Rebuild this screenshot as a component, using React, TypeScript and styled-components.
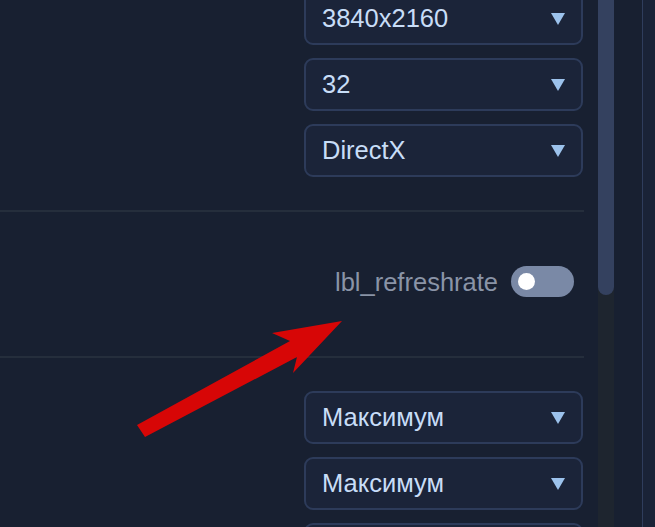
import { FC } from "react";
import styled, { createGlobalStyle } from "styled-components";

const GlobalStyle = createGlobalStyle`
  html, body {
    margin: 0;
    padding: 0;
    background: #182031;
    font-family: "Liberation Sans", Arial, sans-serif;
  }
`;

const Page = styled.div`
  position: relative;
  display: flex;
  height: 100vh;
  width: 100vw;
  overflow: hidden;
  background: #182031;
`;

const Main = styled.div`
  width: 584px;
  flex-shrink: 0;
  overflow: hidden;
`;

// content is scrolled down a little, as in the screenshot
const Content = styled.div`
  margin-top: -41px;
`;

const SelectGroup = styled.div`
  display: flex;
  flex-direction: column;
  align-items: flex-end;
  gap: 13px;
  padding: 33px 1px 33px 0;
`;

const SelectBox = styled.div`
  box-sizing: border-box;
  width: 279px;
  height: 53px;
  display: flex;
  align-items: center;
  justify-content: space-between;
  padding: 0 16px 0 16px;
  background: #1b2439;
  border: 2px solid #2d3b5a;
  border-radius: 9px;
  color: #c8ddf7;
  font-size: 25.5px;
`;

const Caret = styled.svg`
  width: 14px;
  height: 12px;
  fill: #9cc2ec;
`;

const Divider = styled.div`
  height: 2px;
  background: #252e3c;
`;

const ToggleRow = styled.div`
  box-sizing: border-box;
  height: 144px;
  display: flex;
  align-items: center;
  justify-content: flex-end;
  gap: 13px;
  padding: 0 10px 5px 0;
`;

const Label = styled.span`
  color: #8a94a7;
  font-size: 25.5px;
  margin-top: 2px;
`;

const Switch = styled.div<{ $on?: boolean }>`
  box-sizing: border-box;
  width: 63px;
  height: 31px;
  border-radius: 16px;
  background: #7a89a6;
  display: flex;
  align-items: center;
  justify-content: ${(p) => (p.$on ? "flex-end" : "flex-start")};
  padding: 0 7px;
`;

const Knob = styled.div`
  width: 17px;
  height: 17px;
  border-radius: 50%;
  background: #ffffff;
`;

const ScrollTrack = styled.div`
  width: 16px;
  margin-left: 14px;
  flex-shrink: 0;
  background: #1e252f;
`;

const ScrollThumb = styled.div`
  height: 295px;
  background: #34415f;
  border-radius: 0 0 8px 8px;
`;

const Gutter = styled.div`
  width: 28px;
  flex-shrink: 0;
`;

const SideLine = styled.div`
  width: 1px;
  flex-shrink: 0;
  background: #2f3d5c;
`;

const SideStrip = styled.div`
  flex: 1;
  background: #1a2337;
`;

const Annotation = styled.svg`
  position: absolute;
  left: 0;
  top: 0;
  width: 100%;
  height: 100%;
  pointer-events: none;
`;

const Select: FC<{ value: string }> = ({ value }) => (
  <SelectBox>
    <span>{value}</span>
    <Caret viewBox="0 0 14 12">
      <polygon points="0,0 14,0 7,12" />
    </Caret>
  </SelectBox>
);

const App: FC = () => {
  return (
    <>
      <GlobalStyle />
      <Page>
        <Main>
          <Content>
            <SelectGroup>
              <Select value="3840x2160" />
              <Select value="32" />
              <Select value="DirectX" />
            </SelectGroup>
            <Divider />
            <ToggleRow>
              <Label>lbl_refreshrate</Label>
              <Switch>
                <Knob />
              </Switch>
            </ToggleRow>
            <Divider />
            <SelectGroup>
              <Select value="Максимум" />
              <Select value="Максимум" />
              <Select value="Максимум" />
            </SelectGroup>
          </Content>
        </Main>
        <ScrollTrack>
          <ScrollThumb />
        </ScrollTrack>
        <Gutter />
        <SideLine />
        <SideStrip />
        <Annotation viewBox="0 0 655 527">
          <polygon
            fill="#d70606"
            points="137,425 290,341 272,333 342,321 293,373 297,357 145,437"
          />
        </Annotation>
      </Page>
    </>
  );
};

export default App;
